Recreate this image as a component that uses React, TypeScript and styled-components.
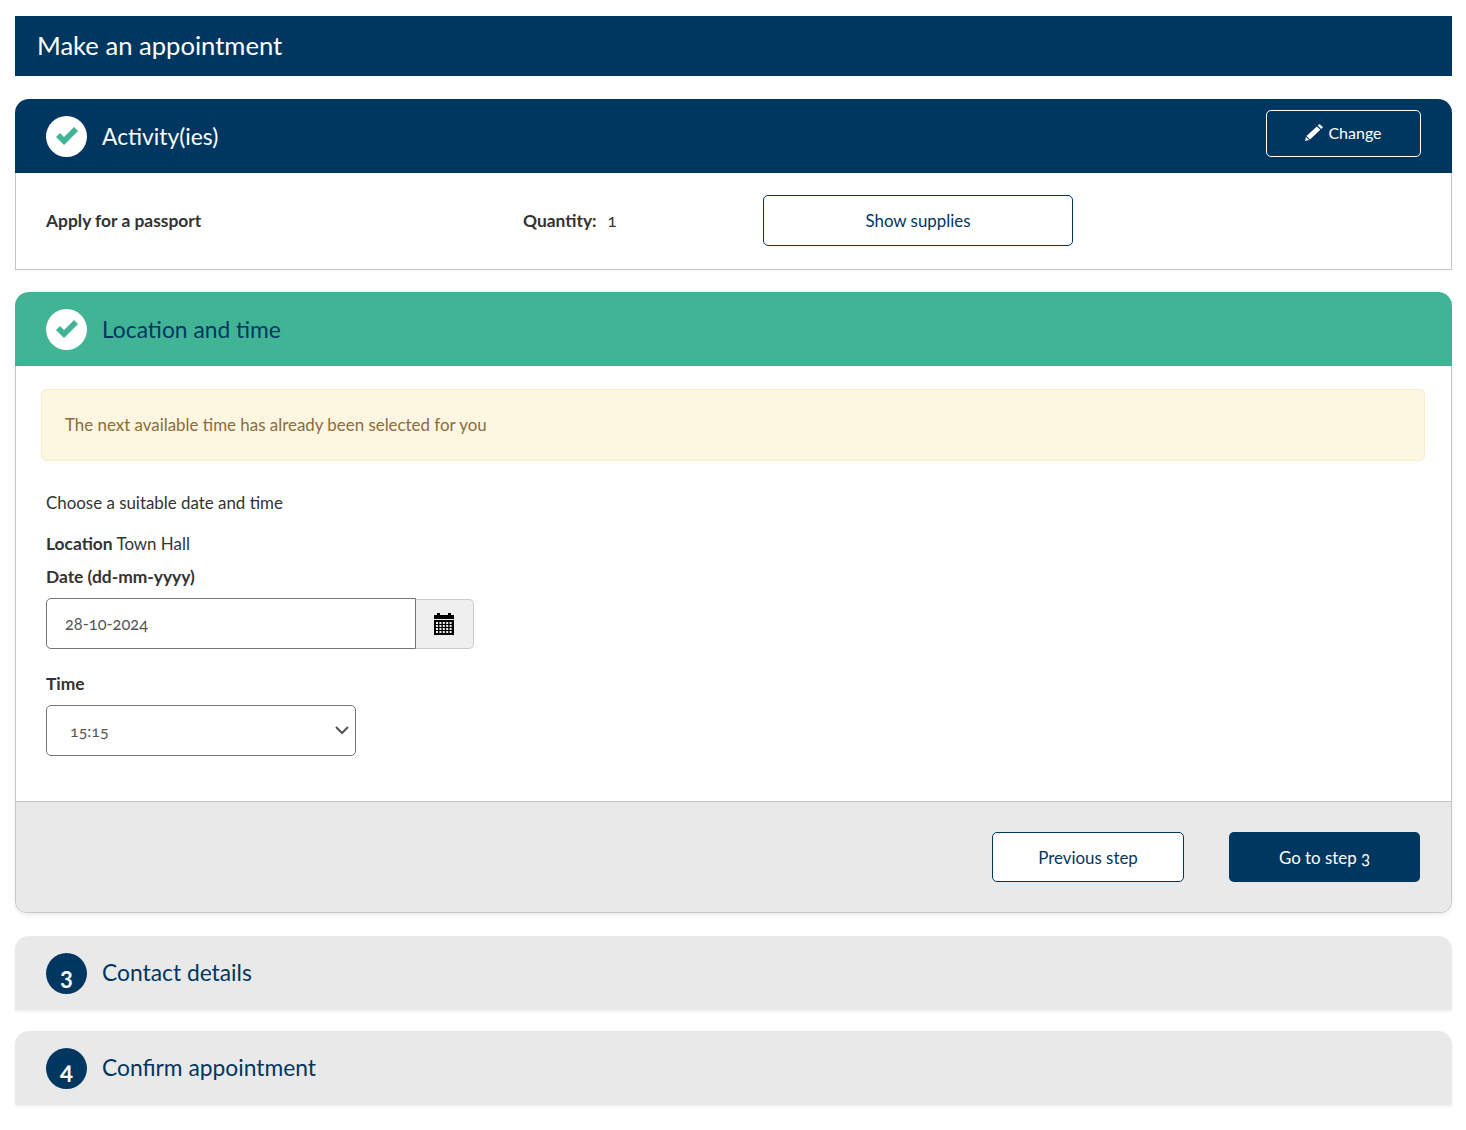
import React from 'react'
import styled, { createGlobalStyle } from 'styled-components'

const navy = '#003761'
const green = '#41b496'
const grey = '#e9e9e9'
const line = '#c8c8c8'

const GlobalStyle = createGlobalStyle`
  html, body {
    margin: 0;
    padding: 0;
    background: #fff;
  }
  body {
    font-family: Lato, "Open Sans", sans-serif;
    font-size: 16.9px;
    color: #333;
    font-variant-numeric: oldstyle-nums;
  }
  * {
    box-sizing: border-box;
  }
`

const Page = styled.div`
  width: 1466px;
  height: 1130px;
  padding: 16px 14px 0 15px;
  overflow: hidden;
`

const PageTitle = styled.h1`
  margin: 0 0 23px;
  height: 60px;
  padding: 0 22px 2px;
  display: flex;
  align-items: center;
  background: ${navy};
  color: #fff;
  font-size: 25.6px;
  font-weight: 400;
`

const Card = styled.section<{ $gap?: number }>`
  margin-bottom: ${({ $gap }) => $gap ?? 22}px;
  border-radius: 14px 14px 0 0;
`

const CardHeader = styled.div<{ $tone: 'navy' | 'green' | 'grey' }>`
  height: 74px;
  padding: 0 31px;
  display: flex;
  align-items: center;
  gap: 15px;
  border-radius: 14px 14px 0 0;
  background: ${({ $tone }) => ($tone === 'navy' ? navy : $tone === 'green' ? green : grey)};
  color: ${({ $tone }) => ($tone === 'navy' ? '#fff' : navy)};
  box-shadow: ${({ $tone }) => ($tone === 'grey' ? '0 2px 3px rgba(0, 0, 0, 0.06)' : 'none')};
`

const StepCircle = styled.span<{ $done?: boolean }>`
  width: 41px;
  height: 41px;
  flex: none;
  display: flex;
  align-items: center;
  justify-content: center;
  border-radius: 50%;
  background: ${({ $done }) => ($done ? '#fff' : navy)};
  color: ${({ $done }) => ($done ? green : '#fff')};
  font-size: 24px;
  font-weight: 700;
  padding-top: ${({ $done }) => ($done ? 0 : 4)}px;
`

const StepTitle = styled.h2<{ $lift?: boolean }>`
  margin: 0;
  padding-bottom: ${({ $lift }) => ($lift ? 2 : 0)}px;
  font-size: 22.8px;
  font-weight: 400;
  flex: 1;
`

const ChangeButton = styled.button`
  width: 155px;
  height: 47px;
  margin: -5px 0 0;
  padding: 0 0 3px;
  display: flex;
  align-items: center;
  justify-content: center;
  gap: 5px;
  background: transparent;
  border: 1px solid #fff;
  border-radius: 5px;
  color: #fff;
  font: inherit;
  font-size: 16px;
`

const CardBody = styled.div`
  border: 1px solid ${line};
  border-top: 0;
`

const ActivityRow = styled.div`
  height: 96px;
  padding: 22px 0 0 30px;
  display: grid;
  grid-template-columns: 477px 240px 310px;
  align-items: start;
  box-shadow: 0 2px 3px rgba(0, 0, 0, 0.04);
`

const ActivityCell = styled.div`
  height: 50px;
  display: flex;
  align-items: center;
  gap: 11px;
`

const Strong = styled.strong`
  color: #333;
  font-size: 17.4px;
  font-weight: 700;
`

const OutlineButton = styled.button<{ $width: number; $height: number }>`
  width: ${({ $width }) => $width}px;
  height: ${({ $height }) => $height}px;
  background: #fff;
  border: 1px solid ${navy};
  border-radius: 5px;
  color: ${navy};
  font: inherit;
`

const Alert = styled.div`
  height: 72px;
  margin: 0 26px 0 25px;
  padding: 0 23px 2px;
  display: flex;
  align-items: center;
  background: #fdf6e1;
  border: 1px solid #f8eec8;
  border-radius: 5px;
  color: #8a6d3b;
`

const Form = styled.div`
  padding: 32px 30px 45px;
`

const Paragraph = styled.p<{ $gap: number }>`
  margin: 0 0 ${({ $gap }) => $gap}px;
  line-height: 20px;
`

const FieldLabel = styled.label`
  display: block;
  margin-bottom: 11px;
  font-size: 17.4px;
  font-weight: 700;
  line-height: 20px;
`

const InputGroup = styled.div`
  display: flex;
  align-items: stretch;
  width: 428px;
  height: 51px;
  margin-bottom: 25px;
`

const DateInput = styled.input`
  width: 370px;
  height: 51px;
  padding: 0 18px;
  border: 1px solid #757575;
  border-radius: 5px 0 0 5px;
  color: #555;
  font: inherit;
  font-size: 16.4px;
  outline: none;
`

const CalendarAddon = styled.span`
  flex: 1;
  margin-top: 1px;
  padding-right: 2px;
  display: flex;
  align-items: center;
  justify-content: center;
  background: #efefef;
  border: 1px solid #ccc;
  border-left: 0;
  border-radius: 0 5px 5px 0;
`

const SelectWrap = styled.div`
  position: relative;
  width: 310px;
  height: 51px;
`

const TimeSelect = styled.select`
  width: 100%;
  height: 100%;
  padding: 0 23px;
  appearance: none;
  background: #fff;
  border: 1px solid #757575;
  border-radius: 5px;
  color: #555;
  font: inherit;
  font-size: 16px;
`

const Chevron = styled.svg`
  position: absolute;
  right: 7px;
  top: 20px;
  pointer-events: none;
`

const CardFooter = styled.div`
  height: 111px;
  padding: 30px 31px 0 0;
  display: flex;
  justify-content: flex-end;
  gap: 45px;
  background: ${grey};
  border-top: 1px solid ${line};
  border-radius: 0 0 12px 12px;
`

const PrimaryButton = styled.button`
  width: 191px;
  height: 50px;
  background: ${navy};
  border: 0;
  border-radius: 5px;
  color: #fff;
  font: inherit;
`

const LocationCard = styled(CardBody)`
  padding-top: 23px;
  border-radius: 0 0 12px 12px;
  box-shadow: 0 2px 4px rgba(0, 0, 0, 0.08);
`

const CheckIcon = () => (
  <svg width="22" height="18" viewBox="0 0 22 18" aria-hidden="true">
    <path d="M0 10l4-4 4 4L18 0l4 4L8 18z" fill="currentColor" />
  </svg>
)

const PencilIcon = () => (
  <svg width="18" height="17" viewBox="0 0 18 17" aria-hidden="true">
    <path d="M14.5 0L18 3.2l-1.8 1.7-3.5-3.3z" fill="#fff" />
    <path d="M11.8 2.4l3.5 3.3L5 15.4 1.5 12.1z" fill="#fff" />
    <path d="M.9 13l3.3 3.1L0 17z" fill="#fff" />
  </svg>
)

const CalendarIcon = () => (
  <svg width="20" height="22" viewBox="0 0 20 22" aria-hidden="true">
    <path d="M3 0h3v2h8V0h3v2h3v4H0V2h3z" fill="#000" />
    <rect x="0" y="7" width="20" height="15" fill="#000" />
    {[0, 1, 2, 3].map((row) =>
      [0, 1, 2, 3, 4].map((col) => (
        <rect key={`${row}-${col}`} x={2 + col * 3.4} y={9 + row * 3} width="2" height="2" fill="#efefef" />
      ))
    )}
  </svg>
)

const App = () => {
  return (
    <Page>
      <GlobalStyle />
      <PageTitle>Make an appointment</PageTitle>

      <Card>
        <CardHeader $tone="navy">
          <StepCircle $done>
            <CheckIcon />
          </StepCircle>
          <StepTitle>Activity(ies)</StepTitle>
          <ChangeButton>
            <PencilIcon />
            Change
          </ChangeButton>
        </CardHeader>
        <CardBody>
          <ActivityRow>
            <ActivityCell>
              <Strong>Apply for a passport</Strong>
            </ActivityCell>
            <ActivityCell>
              <Strong>Quantity:</Strong>
              <span>1</span>
            </ActivityCell>
            <OutlineButton $width={310} $height={51}>
              Show supplies
            </OutlineButton>
          </ActivityRow>
        </CardBody>
      </Card>

      <Card $gap={23}>
        <CardHeader $tone="green">
          <StepCircle $done>
            <CheckIcon />
          </StepCircle>
          <StepTitle>Location and time</StepTitle>
        </CardHeader>
        <LocationCard>
          <Alert>The next available time has already been selected for you</Alert>
          <Form>
            <Paragraph $gap={21}>Choose a suitable date and time</Paragraph>
            <Paragraph $gap={13}>
              <Strong>Location</Strong> Town Hall
            </Paragraph>
            <FieldLabel>Date (dd-mm-yyyy)</FieldLabel>
            <InputGroup>
              <DateInput defaultValue="28-10-2024" />
              <CalendarAddon>
                <CalendarIcon />
              </CalendarAddon>
            </InputGroup>
            <FieldLabel>Time</FieldLabel>
            <SelectWrap>
              <TimeSelect defaultValue="15:15">
                <option>15:15</option>
              </TimeSelect>
              <Chevron width="14" height="10" viewBox="0 0 14 10" aria-hidden="true">
                <path d="M1 2l6 6 6-6" fill="none" stroke="#555" strokeWidth="2" />
              </Chevron>
            </SelectWrap>
          </Form>
          <CardFooter>
            <OutlineButton $width={192} $height={50}>
              Previous step
            </OutlineButton>
            <PrimaryButton>Go to step 3</PrimaryButton>
          </CardFooter>
        </LocationCard>
      </Card>

      <Card $gap={21}>
        <CardHeader $tone="grey">
          <StepCircle>3</StepCircle>
          <StepTitle $lift>Contact details</StepTitle>
        </CardHeader>
      </Card>

      <Card>
        <CardHeader $tone="grey">
          <StepCircle>4</StepCircle>
          <StepTitle $lift>Confirm appointment</StepTitle>
        </CardHeader>
      </Card>
    </Page>
  )
}

export default App
